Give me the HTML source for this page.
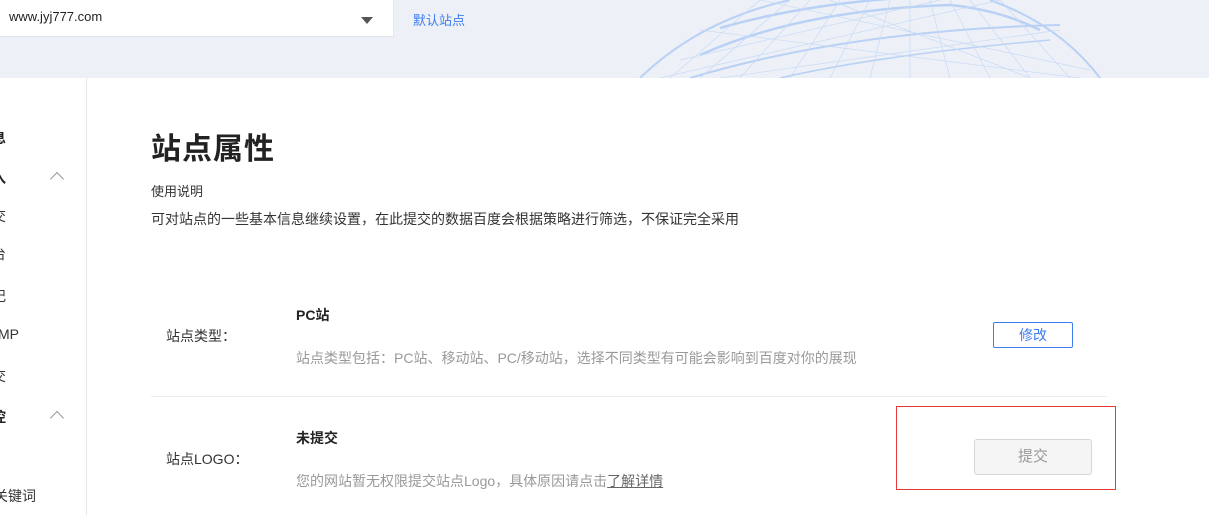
<!DOCTYPE html>
<html><head><meta charset="utf-8"><style>
*{margin:0;padding:0;box-sizing:border-box}
body{width:1209px;height:515px;overflow:hidden;background:#fff;font-family:"Liberation Sans","Noto Sans CJK SC",sans-serif;position:relative;color:#333}
.top{position:absolute;left:0;top:0;width:1209px;height:78px;background:#edf0f7;overflow:hidden}
.sel{position:absolute;left:0;top:0;width:394px;height:37px;background:#fff;border-bottom:1px solid #dde2ec;border-right:1px solid #e6e9f0}
.sel span{position:absolute;left:9px;top:9px;font-size:13px;color:#222}
.tri{position:absolute;left:361px;top:17px;width:0;height:0;border-left:6px solid transparent;border-right:6px solid transparent;border-top:7px solid #555}
.def{position:absolute;left:413px;top:10px;font-size:13px;color:#3e7cf0}
.side{position:absolute;left:0;top:78px;width:87px;height:437px;border-right:1px solid #e8e8e8}
.s{position:absolute;font-size:14px;color:#333;white-space:nowrap}
.b{font-weight:bold;color:#222}
.car{position:absolute;left:52px;width:10px;height:10px;border-left:1.5px solid #999;border-top:1.5px solid #999;transform:rotate(45deg)}
h1{position:absolute;left:151px;top:124px;font-size:30px;font-weight:bold;color:#222;letter-spacing:1px}
.t{position:absolute;font-size:14px;white-space:nowrap}
.line{position:absolute;left:151px;top:396px;width:956px;height:1px;background:#ececec}
.btn1{position:absolute;left:993px;top:322px;width:80px;height:26px;border:1px solid #3e7cf0;border-radius:2px;color:#3e7cf0;font-size:14px;text-align:center;line-height:24px}
.red{position:absolute;left:896px;top:406px;width:220px;height:84px;border:1px solid #e53935}
.btn2{position:absolute;left:974px;top:439px;width:118px;height:36px;border:1px solid #d6d6d6;border-radius:3px;background:#f5f5f5;color:#999;font-size:15px;text-align:center;line-height:34px}
</style></head><body>
<div class="top">
<svg width="1209" height="78" style="position:absolute;left:0;top:0" fill="none">
<defs><radialGradient id="g" cx="0.5" cy="0.8" r="0.6"><stop offset="0" stop-color="#e6eefb"/><stop offset="1" stop-color="#edf0f7" stop-opacity="0"/></radialGradient></defs>
<ellipse cx="880" cy="120" rx="250" ry="140" fill="url(#g)"/>
<g stroke="#a8c7f4" opacity="0.75">
<path d="M640 78 Q700 20 790 0" stroke-width="2"/>
<path d="M1100 78 Q1060 25 990 0" stroke-width="2"/>
<path d="M700 55 Q800 10 950 5 Q1000 10 1040 30" stroke-width="2.5"/>
<path d="M720 28 Q800 5 900 -2" stroke-width="2.5"/>
<path d="M690 78 Q850 30 1060 25" stroke-width="2"/>
<path d="M780 78 Q880 55 1050 40" stroke-width="1.5"/>
<g stroke-width="0.7" stroke="#bcd4f6">
<path d="M670 78 L760 0 M700 78 L790 0 M740 78 L810 0 M790 78 L840 0 M830 78 L870 0 M870 78 L890 0 M910 78 L910 0 M950 78 L930 0 M990 78 L950 0 M1030 78 L970 0 M1070 78 L1000 0"/>
<path d="M660 78 L1000 0 M720 78 L1060 30 M760 0 L1090 70 M700 30 L1080 78 M830 0 L1030 78 M680 60 L940 0"/>
</g></g>
</svg>
<div class="sel"><span>www.jyj777.com</span><div class="tri"></div></div>
<div class="def">默认站点</div>
</div>
<div class="side"></div>
<div class="s b" style="left:-22px;top:128px">信息</div>
<div class="s b" style="left:-8px;top:168px">入</div>
<div class="car" style="top:174px"></div>
<div class="s" style="left:-8px;top:206px">交</div>
<div class="s" style="left:-8px;top:244px">台</div>
<div class="s" style="left:-8px;top:286px">记</div>
<div class="s" style="left:-2px;top:326px">MP</div>
<div class="s" style="left:-8px;top:366px">交</div>
<div class="s b" style="left:-8px;top:407px">控</div>
<div class="car" style="top:413px"></div>
<div class="s" style="left:-6px;top:486px">关键词</div>
<h1>站点属性</h1>
<div class="t" style="left:151px;top:181px;color:#333;font-size:13px">使用说明</div>
<div class="t" style="left:151px;top:209px;color:#333">可对站点的一些基本信息继续设置，在此提交的数据百度会根据策略进行筛选，不保证完全采用</div>
<div class="t" style="left:166px;top:326px;color:#333">站点类型：</div>
<div class="t b" style="left:296px;top:305px">PC站</div>
<div class="t" style="left:296px;top:348px;color:#999">站点类型包括：PC站、移动站、PC/移动站，选择不同类型有可能会影响到百度对你的展现</div>
<div class="btn1">修改</div>
<div class="line"></div>
<div class="t" style="left:166px;top:449px;color:#333">站点LOGO：</div>
<div class="t b" style="left:296px;top:428px">未提交</div>
<div class="t" style="left:296px;top:471px;color:#999">您的网站暂无权限提交站点Logo，具体原因请点击<span style="color:#666;text-decoration:underline">了解详情</span></div>
<div class="red"></div>
<div class="btn2">提交</div>
</body></html>
